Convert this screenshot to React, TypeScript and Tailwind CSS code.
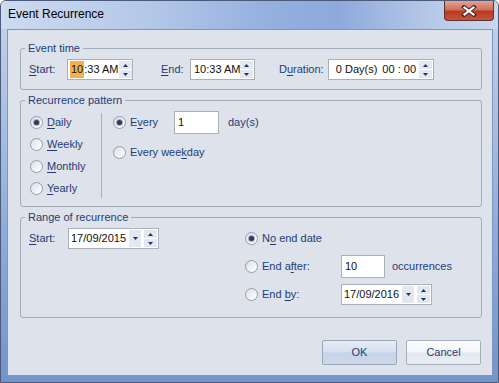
import React from "react"

const font = "font-['Liberation_Sans',Arial,sans-serif]"

function U({ children }: { children: React.ReactNode }) {
  return <span className="underline underline-offset-[2px] decoration-[1px]">{children}</span>
}

function SpinArrows() {
  return (
    <div className="flex flex-col w-[13px] shrink-0 self-stretch my-[1px] mr-[1px] gap-[1px]">
      <div className="flex-1 flex items-center justify-center bg-[#e2e7f0]">
        <svg width="5" height="3" viewBox="0 0 5 3">
          <path d="M0 3 L2.5 0 L5 3 Z" fill="#1d3566" />
        </svg>
      </div>
      <div className="flex-1 flex items-center justify-center bg-[#e2e7f0]">
        <svg width="5" height="3" viewBox="0 0 5 3">
          <path d="M0 0 L5 0 L2.5 3 Z" fill="#1d3566" />
        </svg>
      </div>
    </div>
  )
}

function DropArrow() {
  return (
    <div className="flex items-center justify-center w-[12px] shrink-0 self-stretch my-[1px] mr-[3px] bg-[#e2e7f0]">
      <svg width="5" height="3" viewBox="0 0 5 3">
        <path d="M0 0 L5 0 L2.5 3 Z" fill="#1d3566" />
      </svg>
    </div>
  )
}

function Box({ className, children }: { className: string; children: React.ReactNode }) {
  return (
    <div className={`flex items-center shrink-0 whitespace-nowrap leading-[13px] bg-white border border-[#a9b0ba] text-[11px] text-[#111] ${className}`}>
      {children}
    </div>
  )
}

function Radio({ checked, label }: { checked?: boolean; label: React.ReactNode }) {
  return (
    <div className="flex items-center gap-[4px] whitespace-nowrap">
      <span className="flex items-center justify-center shrink-0 w-[13px] h-[13px] rounded-full border border-[#949cab] bg-gradient-to-br from-[#dadde3] via-[#eef0f3] to-[#ffffff]">
        {checked && (
          <span className="w-[5px] h-[5px] rounded-full bg-[#2d3b57] shadow-[0_0_0_1px_#9fb0cc]" />
        )}
      </span>
      <span className="text-[#1f3d74] text-[11px] leading-[13px]">{label}</span>
    </div>
  )
}

function Group({ title, className, children }: { title: string; className?: string; children: React.ReactNode }) {
  return (
    <fieldset className={`border border-[#a3abb8] rounded-[3px] ${className ?? ""}`}>
      <legend className="ml-[4px] px-[3px] text-[11px] leading-[14px] text-[#1f3d74]">{title}</legend>
      {children}
    </fieldset>
  )
}

function Button({ label, def }: { label: string; def?: boolean }) {
  return (
    <button
      className={`w-[75px] h-[25px] rounded-[2px] border text-[11px] text-[#1f3d74] ${
        def
          ? "border-[#9aa6ba] bg-[linear-gradient(#e3ebf6_0%,#d7e1f0_48%,#c6d4e8_52%,#ccd8ea_100%)]"
          : "border-[#a6afbd] bg-[linear-gradient(#fdfdfe_0%,#f2f5f9_48%,#e3e8f0_52%,#e9edf3_100%)]"
      }`}
    >
      {label}
    </button>
  )
}

export default function App() {
  return (
    <div className={`w-[499px] h-[383px] ${font} bg-[linear-gradient(#c4d4ec_0%,#a9c0e4_30%,#86a6d6_70%,#7194cb_100%)] border border-[#4a5a78] rounded-t-[6px] flex flex-col overflow-hidden`}>
      {/* title bar */}
      <div className="h-[28px] shrink-0 flex items-start justify-between bg-[linear-gradient(90deg,#cddbf0_0%,#b3c7e8_30%,#93afde_55%,#8eaadb_68%,#b9cbea_88%,#c9d7ef_100%)]">
        <span className="ml-[7px] mt-[6px] text-[12px] leading-[14px] text-black">Event Recurrence</span>
        <div className="mr-[4px] w-[50px] h-[20px] rounded-b-[4px] border border-t-0 border-[#5b3232] bg-[linear-gradient(#e8a393_0%,#d0705b_45%,#b83a22_55%,#c9533a_100%)] flex items-center justify-center">
          <svg width="16" height="12" viewBox="0 0 16 12">
            <path d="M3 2 L13 10 M13 2 L3 10" stroke="#3b2a2a" strokeWidth="4" strokeLinecap="square" />
            <path d="M3.5 2.5 L12.5 9.5 M12.5 2.5 L3.5 9.5" stroke="#ffffff" strokeWidth="2.2" strokeLinecap="square" />
          </svg>
        </div>
      </div>

      {/* client area */}
      <div className="ml-[6px] w-[486px] h-[347px] bg-[#dde2eb] border border-[#8097bd] flex flex-col pl-[12px] pr-[10px] pt-[11px] leading-[13px]">
        <Group title="Event time">
          <div className="flex items-center pl-[8px] pt-[4px] pb-[9px] text-[11px] text-[#1f3d74] whitespace-nowrap">
            <span className="w-[38px]">
              <U>S</U>tart:
            </span>
            <Box className="w-[66px] h-[21px]">
              <span className="ml-[2px] bg-[#f6b04a] px-[1px] py-[2px]">10</span>
              <span className="flex-1">:33 AM</span>
              <SpinArrows />
            </Box>
            <span className="ml-[28px] w-[29px]">
              <U>E</U>nd:
            </span>
            <Box className="w-[65px] h-[21px]">
              <span className="flex-1 pl-[3px]">10:33 AM</span>
              <SpinArrows />
            </Box>
            <span className="ml-[24px] w-[49px]">
              D<U>u</U>ration:
            </span>
            <Box className="w-[106px] h-[21px] justify-end">
              <span>0 Day(s)</span>
              <span className="ml-[5px] mr-[3px]">00 : 00</span>
              <SpinArrows />
            </Box>
          </div>
        </Group>

        <Group title="Recurrence pattern" className="mt-[3px]">
          <div className="flex pt-[4px] pb-[7px]">
            <div className="w-[80px] pl-[9px] flex flex-col">
              <div className="h-[22px] flex items-center">
                <Radio checked label={<><U>D</U>aily</>} />
              </div>
              <div className="h-[22px] flex items-center">
                <Radio label={<><U>W</U>eekly</>} />
              </div>
              <div className="h-[22px] flex items-center">
                <Radio label={<><U>M</U>onthly</>} />
              </div>
              <div className="h-[22px] flex items-center">
                <Radio label={<><U>Y</U>early</>} />
              </div>
            </div>
            <div className="w-px bg-[#aab1bd] mt-[2px] mb-[1px]" />
            <div className="pl-[11px] flex flex-col">
              <div className="h-[23px] flex items-center">
                <div className="w-[61px]">
                  <Radio checked label={<>E<U>v</U>ery</>} />
                </div>
                <Box className="w-[45px] h-[23px]">
                  <span className="pl-[3px]">1</span>
                </Box>
                <span className="ml-[9px] text-[11px] text-[#1f3d74]">day(s)</span>
              </div>
              <div className="h-[22px] mt-[7px] flex items-center">
                <Radio label={<>Every wee<U>k</U>day</>} />
              </div>
            </div>
          </div>
        </Group>

        <Group title="Range of recurrence" className="mt-[3px]">
          <div className="flex pt-[4px] pb-[12px] whitespace-nowrap">
            <div className="flex items-center h-[21px] pl-[8px] text-[11px] text-[#1f3d74]">
              <span className="w-[39px]">
                <U>S</U>tart:
              </span>
              <Box className="w-[91px] h-[21px]">
                <span className="flex-1 pl-[2px]">17/09/2015</span>
                <DropArrow />
                <SpinArrows />
              </Box>
            </div>
            <div className="ml-[86px] flex flex-col gap-[6px] text-[11px] text-[#1f3d74]">
              <div className="h-[21px] flex items-center">
                <Radio checked label={<>N<U>o</U> end date</>} />
              </div>
              <div className="h-[23px] flex items-center">
                <div className="w-[96px]">
                  <Radio label={<>End a<U>f</U>ter:</>} />
                </div>
                <Box className="w-[44px] h-[23px]">
                  <span className="pl-[3px]">10</span>
                </Box>
                <span className="ml-[7px]">occurrences</span>
              </div>
              <div className="h-[21px] flex items-center">
                <div className="w-[96px]">
                  <Radio label={<>End <U>b</U>y:</>} />
                </div>
                <Box className="w-[91px] h-[21px]">
                  <span className="flex-1 pl-[2px]">17/09/2016</span>
                  <DropArrow />
                  <SpinArrows />
                </Box>
              </div>
            </div>
          </div>
        </Group>

        <div className="flex justify-end gap-[9px] mt-[22px] pr-[1px]">
          <Button label="OK" def />
          <Button label="Cancel" />
        </div>
      </div>
    </div>
  )
}
